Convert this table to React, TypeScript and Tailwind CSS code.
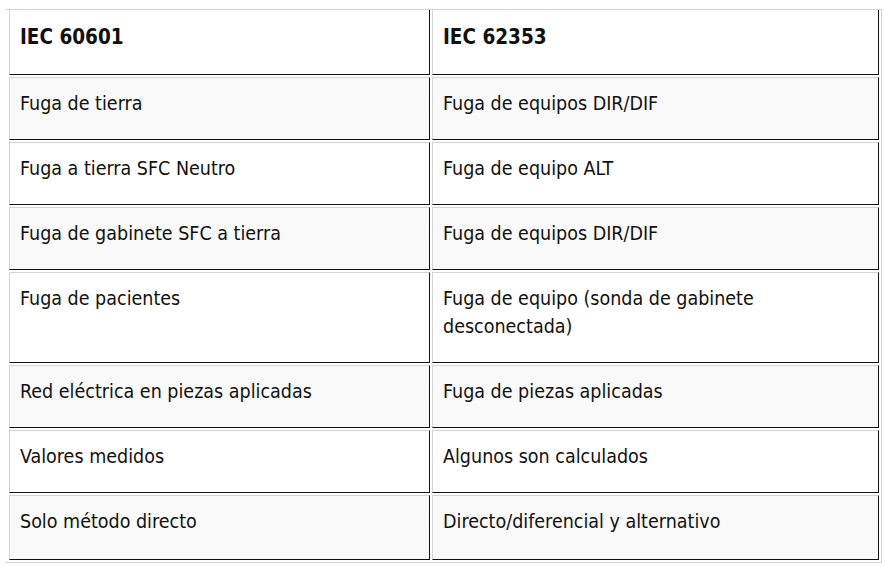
import React from 'react';

const rows: [string, string][] = [
  ['Fuga de tierra', 'Fuga de equipos DIR/DIF'],
  ['Fuga a tierra SFC Neutro', 'Fuga de equipo ALT'],
  ['Fuga de gabinete SFC a tierra', 'Fuga de equipos DIR/DIF'],
  ['Fuga de pacientes', 'Fuga de equipo (sonda de gabinete desconectada)'],
  ['Red eléctrica en piezas aplicadas', 'Fuga de piezas aplicadas'],
  ['Valores medidos', 'Algunos son calculados'],
  ['Solo método directo', 'Directo/diferencial y alternativo'],
];

const cell =
  'border-l border-t border-r border-b border-l-[#d4d4d4] border-t-[#d4d4d4] border-r-[#111] border-b-[#111] px-[10px] pt-[12px]';

const head =
  'border-l border-r border-b border-l-[#d4d4d4] border-r-[#111] border-b-[#111] px-[10px] pt-[12.5px] pb-[23.5px] font-bold text-[20.5px]';

export default function App() {
  return (
    <div className="min-h-screen bg-white text-[#111] text-[19.5px] leading-[28px] font-['DejaVu_Sans_Condensed','DejaVu_Sans',sans-serif] [font-stretch:condensed] pt-[9px] pl-[6px]">
      <div className="w-[876px] border-t border-r border-b border-[#d4d4d4] pl-[3px] pr-[2px] pb-[2px]">
        <div className="grid grid-cols-[421px_447px] gap-[2px]">
          {/* header */}
          <div className={head}>IEC 60601</div>
          <div className={head}>IEC 62353</div>

          {rows.map(([a, b], i) => {
            const bg = i % 2 === 0 ? 'bg-[#f9f9f9]' : 'bg-white';
            const pb = i === rows.length - 1 ? 'pb-[23px]' : 'pb-[21px]';
            return (
              <React.Fragment key={i}>
                <div className={`${cell} ${pb} ${bg}`}>{a}</div>
                <div className={`${cell} ${pb} ${bg}`}>{b}</div>
              </React.Fragment>
            );
          })}
        </div>
      </div>
    </div>
  );
}
